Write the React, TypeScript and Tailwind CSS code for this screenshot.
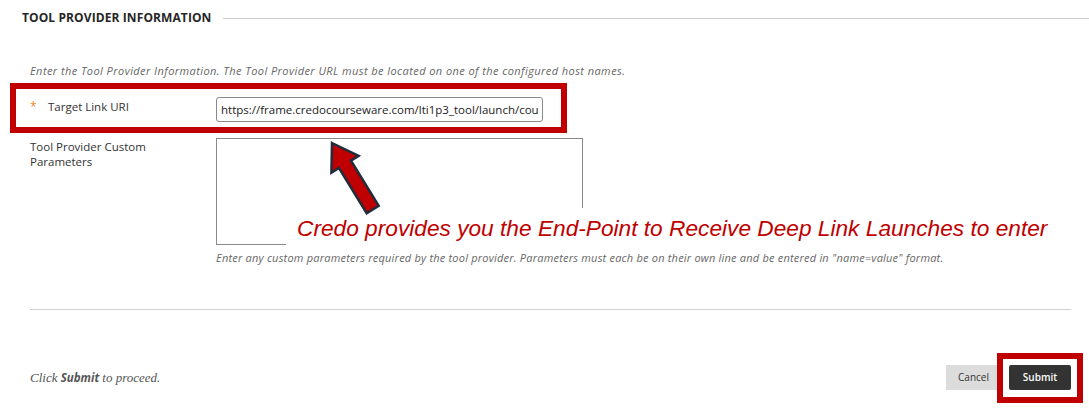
export default function App() {
  return (
    <main className="relative w-[1089px] h-[409px] overflow-hidden bg-white text-[#333] font-['Open_Sans',sans-serif]">
      {/* section heading with rule */}
      <div className="flex items-center pt-[10px] pl-[22px]">
        <h2 className="text-[12px] leading-4 font-bold tracking-[0.1px] text-[#262626] whitespace-nowrap">
          TOOL PROVIDER INFORMATION
        </h2>
        <div className="ml-[12px] h-px flex-1 bg-[#cdcdcd]" />
      </div>

      <p className="mt-[37px] pl-[30px] text-[11px] leading-4 italic text-[#666] tracking-[0.43px] whitespace-nowrap">
        Enter the Tool Provider Information. The Tool Provider URL must be located on one of the configured host names.
      </p>

      {/* target link row */}
      <div className="mt-[18px] flex pl-[30px]">
        <div className="w-[186px] flex items-start pt-[2px] text-[11.5px] leading-4">
          <span className="w-[18px] text-[#f08a24] text-[12px]">*</span>
          <span>Target Link URI</span>
        </div>
        <div className="w-[327px] h-[25px] rounded-[3px] border border-[#8a8a8a] px-[4px] flex items-center text-[11.5px] text-[#222] overflow-hidden whitespace-nowrap">
          https://frame.credocourseware.com/lti1p3_tool/launch/cou
        </div>
      </div>

      {/* custom parameters row */}
      <div className="mt-[16px] flex pl-[30px]">
        <div className="w-[186px] text-[11.5px] leading-[15px] pt-[1px]">
          Tool Provider Custom
          <br />
          Parameters
        </div>
        <div className="w-[367px] h-[107px] border border-[#8a8a8a]" />
      </div>

      <p className="mt-[6px] pl-[216px] text-[11px] leading-[14px] italic text-[#666] tracking-[0.21px] whitespace-nowrap">
        Enter any custom parameters required by the tool provider. Parameters must each be on their own line and be entered in "name=value" format.
      </p>

      <div className="mt-[44px] ml-[30px] mr-[18px] h-px bg-[#d0d0d0]" />

      {/* footer actions */}
      <div className="mt-[55px] flex items-center justify-between pl-[30px] pr-[18px]">
        <p className="text-[13px] italic text-[#555] font-['Liberation_Serif',serif]">
          Click <b className="font-['Open_Sans',sans-serif] font-bold text-[11.5px]">Submit</b> to proceed.
        </p>
        <div className="flex items-center gap-[8px]">
          <button className="h-[25px] w-[55px] bg-[#dcdcdc] text-[10px] text-[#333]">Cancel</button>
          <button className="h-[25px] w-[62px] bg-[#333] text-[10px] font-semibold text-white rounded-[2px]">Submit</button>
        </div>
      </div>

      {/* callout: caption over the textarea corner */}
      <div className="absolute left-[286px] top-[208px] bg-white pl-[11px] pr-[6px] py-[2px]">
        <span className="block text-[22.7px] leading-[36px] italic text-[#c00000] font-['Liberation_Sans',sans-serif] whitespace-nowrap">
          Credo provides you the End-Point to Receive Deep Link Launches to enter
        </span>
      </div>

      {/* callout arrow */}
      <svg className="absolute left-0 top-0 pointer-events-none" width="1089" height="409" viewBox="0 0 1089 409">
        <polygon
          points="332,143 358.6,155.9 351,160.6 378.7,205.8 366.7,213.2 339,168 331.4,172.7"
          fill="#c00000"
          stroke="#1f2d3d"
          strokeWidth="2.5"
          strokeLinejoin="miter"
        />
      </svg>

      {/* highlight frames */}
      <div className="absolute left-[10px] top-[83px] w-[557px] h-[50px] border-[6px] border-[#c00000]" />
      <div className="absolute left-[997px] top-[353px] w-[86px] h-[50px] border-[6px] border-[#c00000]" />
    </main>
  );
}
